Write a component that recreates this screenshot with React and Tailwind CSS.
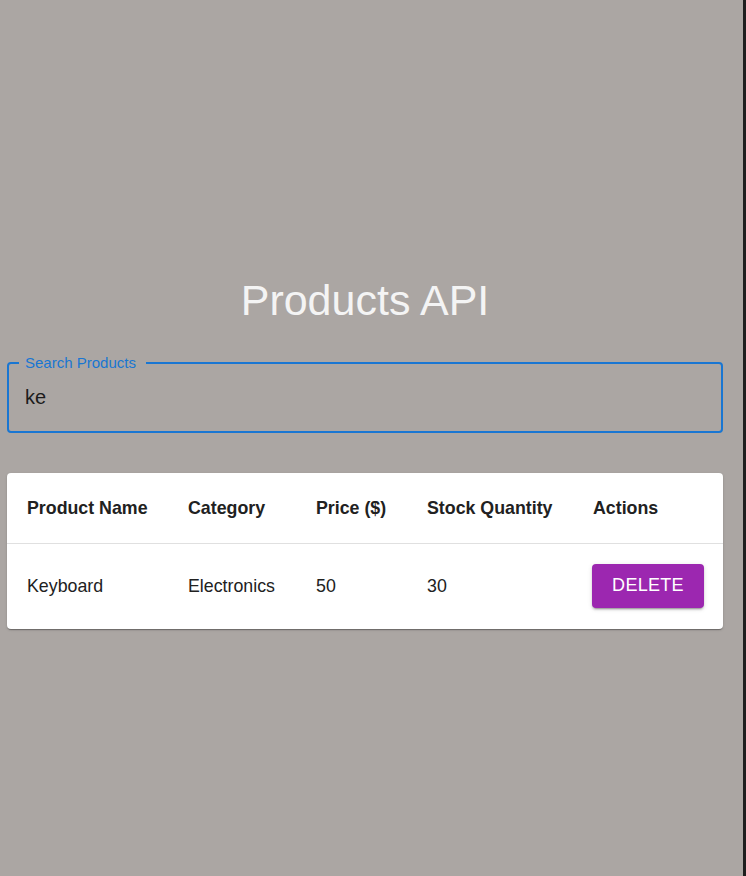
export default function App() {
  const font = { fontFamily: '"Liberation Sans", Arial, sans-serif' };
  const cols = "grid grid-cols-[161px_128px_111px_166px_150px]";
  return (
    <div className="min-h-[876px] bg-[#aba6a3] flex" style={font}>
      <div className="w-[743px] pl-[7px] pt-[276px]">
        <div className="w-[716px]">
          <h1 className="text-[43px] leading-[48px] text-center text-[#f4f4f4] font-normal">
            Products API
          </h1>
          <div className="relative mt-[38px] h-[71px] border-2 border-[#1976d2] rounded-[4px] flex items-center pl-[16px]">
            <span className="absolute top-[-11px] left-[10px] bg-[#aba6a3] pl-[6px] pr-[10px] text-[15px] leading-[20px] text-[#1976d2]">
              Search Products
            </span>
            <span className="text-[20px] leading-[24px] text-[#1c1c1c] -mt-[1px]">ke</span>
          </div>
          <div className="mt-[40px] bg-white rounded-[4px] shadow-[0_2px_1px_-1px_rgba(0,0,0,0.2),0_1px_1px_0_rgba(0,0,0,0.14),0_1px_3px_0_rgba(0,0,0,0.12)] text-[17.8px] text-[#212121]">
            <div className={`${cols} h-[71px] items-center border-b border-[#e0e0e0] font-bold`}>
              <div className="pl-[20px]">Product Name</div>
              <div className="pl-[20px]">Category</div>
              <div className="pl-[20px]">Price ($)</div>
              <div className="pl-[20px]">Stock Quantity</div>
              <div className="pl-[20px]">Actions</div>
            </div>
            <div className={`${cols} h-[85px] items-center`}>
              <div className="pl-[20px]">Keyboard</div>
              <div className="pl-[20px]">Electronics</div>
              <div className="pl-[20px]">50</div>
              <div className="pl-[20px]">30</div>
              <div className="pl-[19px] flex">
                <button className="w-[112px] h-[44px] -mt-[2px] rounded-[4px] bg-[#9c27b0] text-white text-[18px] tracking-[0.3px] shadow-[0_3px_1px_-2px_rgba(0,0,0,0.2),0_2px_2px_0_rgba(0,0,0,0.14),0_1px_5px_0_rgba(0,0,0,0.12)]">
                  DELETE
                </button>
              </div>
            </div>
          </div>
        </div>
      </div>
      <div className="w-[3px] bg-[#1e1e1e]" />
    </div>
  );
}
